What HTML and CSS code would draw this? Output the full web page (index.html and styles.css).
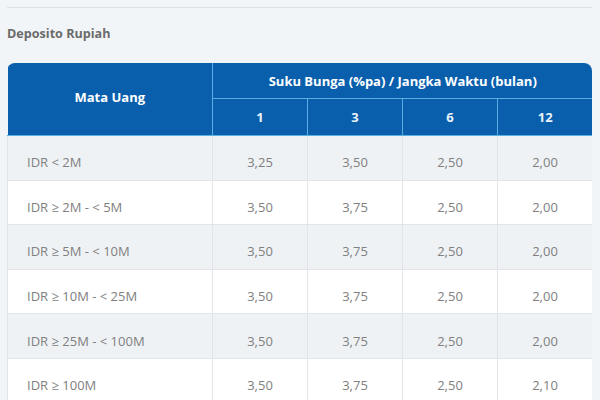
FILE: index.html
```html
<!DOCTYPE html>
<html>
<head>
<meta charset="utf-8">
<link rel="stylesheet" href="styles.css">
</head>
<body>
<div class="page">
  <div class="rule"></div>
  <h2 class="title">Deposito Rupiah</h2>
  <div class="table-wrap">
    <table class="rates">
      <colgroup>
        <col class="c-first"><col class="c-num"><col class="c-num"><col class="c-num"><col class="c-num">
      </colgroup>
      <thead>
        <tr class="h1">
          <th rowspan="2" class="th-first">Mata Uang</th>
          <th colspan="4" class="th-group">Suku Bunga (%pa) / Jangka Waktu (bulan)</th>
        </tr>
        <tr class="h2">
          <th>1</th><th>3</th><th>6</th><th>12</th>
        </tr>
      </thead>
      <tbody>
        <tr class="odd"><td class="lbl">IDR &lt; 2M</td><td>3,25</td><td>3,50</td><td>2,50</td><td>2,00</td></tr>
        <tr><td class="lbl">IDR ≥ 2M - &lt; 5M</td><td>3,50</td><td>3,75</td><td>2,50</td><td>2,00</td></tr>
        <tr class="odd"><td class="lbl">IDR ≥ 5M - &lt; 10M</td><td>3,50</td><td>3,75</td><td>2,50</td><td>2,00</td></tr>
        <tr><td class="lbl">IDR ≥ 10M - &lt; 25M</td><td>3,50</td><td>3,75</td><td>2,50</td><td>2,00</td></tr>
        <tr class="odd"><td class="lbl">IDR ≥ 25M - &lt; 100M</td><td>3,50</td><td>3,75</td><td>2,50</td><td>2,00</td></tr>
        <tr><td class="lbl">IDR ≥ 100M</td><td>3,50</td><td>3,75</td><td>2,50</td><td>2,10</td></tr>
      </tbody>
    </table>
  </div>
</div>
</body>
</html>
```
FILE: styles.css
```css
html, body {
  margin: 0;
  padding: 0;
  background: #f2f5f8;
  font-family: "Open Sans", "Noto Sans", sans-serif;
}
.page {
  padding: 7px 8px 0 7px;
}
.rule {
  height: 1px;
  background: #dde1e6;
}
.title {
  margin: 17px 0 0 0;
  font-size: 12.6px;
  line-height: 18px;
  font-weight: 700;
  color: #6b6b6b;
}
.table-wrap {
  margin-top: 20px;
  border-radius: 8px 8px 0 0;
  overflow: hidden;
  width: 585px;
}
.rates {
  width: 585px;
  border-collapse: collapse;
  table-layout: fixed;
}
.c-first { width: 205px; }
.c-num { width: 95px; }
.rates th {
  background: #0a5fad;
  color: #ffffff;
  font-size: 13px;
  font-weight: 700;
  text-align: center;
  padding: 0;
  border: 1px solid #5aaee0;
}
.rates thead tr:first-child th { border-top: none; }
.rates th.th-first { border-left: none; padding-bottom: 4px; }
.rates tr th:last-child { border-right: none; }
.rates tr.h1 th { height: 35px; }
.rates tr.h2 th { height: 36px; color: #e8f3fb; }
.rates td {
  height: 34.6px;
  padding: 9px 0 0 0;
  font-size: 13px;
  color: #808080;
  text-align: center;
  border: 1px solid #e1e4e9;
  background: #ffffff;
}
.rates tr.odd td { background: #eff2f5; }
.rates td.lbl {
  text-align: left;
  padding-left: 19px;
}
.rates tbody tr:first-child td { border-top: none; }
```
